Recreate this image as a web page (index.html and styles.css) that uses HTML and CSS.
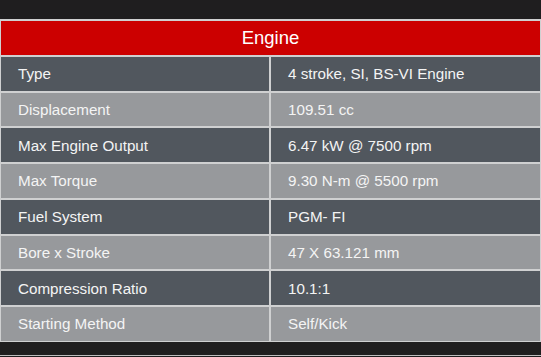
FILE: index.html
```html
<!DOCTYPE html>
<html>
<head>
<meta charset="utf-8">
<link rel="stylesheet" href="styles.css">
</head>
<body>
<div class="page">
  <div class="specs">
    <div class="head">Engine</div>
    <div class="cell dark">Type</div><div class="cell dark val">4 stroke, SI, BS-VI Engine</div>
    <div class="cell light">Displacement</div><div class="cell light val">109.51 cc</div>
    <div class="cell dark">Max Engine Output</div><div class="cell dark val">6.47 kW @ 7500 rpm</div>
    <div class="cell light">Max Torque</div><div class="cell light val">9.30 N-m @ 5500 rpm</div>
    <div class="cell dark">Fuel System</div><div class="cell dark val">PGM- FI</div>
    <div class="cell light">Bore x Stroke</div><div class="cell light val">47 X 63.121 mm</div>
    <div class="cell dark">Compression Ratio</div><div class="cell dark val">10.1:1</div>
    <div class="cell light">Starting Method</div><div class="cell light val">Self/Kick</div>
  </div>
  <div class="foot"></div>
</div>
</body>
</html>
```

FILE: styles.css
```css
html, body {
  margin: 0;
  padding: 0;
  background: #1f1e1f;
}
.page {
  width: 541px;
  height: 357px;
  padding-top: 19px;
  box-sizing: border-box;
  font-family: "Liberation Sans", Arial, sans-serif;
  color: #f4f4f4;
}
.specs {
  display: grid;
  grid-template-columns: 268px 269px;
  grid-auto-rows: 33.75px;
  gap: 2px;
  padding: 2px 1px 1px 1px;
  background: #cfd0d1;
}
.head {
  grid-column: 1 / 3;
  height: 34px;
  background: #cc0000;
  display: flex;
  align-items: center;
  justify-content: center;
  font-size: 18.5px;
  color: #ffffff;
}
.cell {
  display: flex;
  align-items: center;
  padding-left: 17px;
  font-size: 15.2px;
}
.val {
  padding-left: 17px;
}
.dark {
  background: #51575e;
}
.light {
  background: #97999c;
}
.foot {
  height: 13px;
  border-bottom: 1px solid #bdbdbd;
}
```
